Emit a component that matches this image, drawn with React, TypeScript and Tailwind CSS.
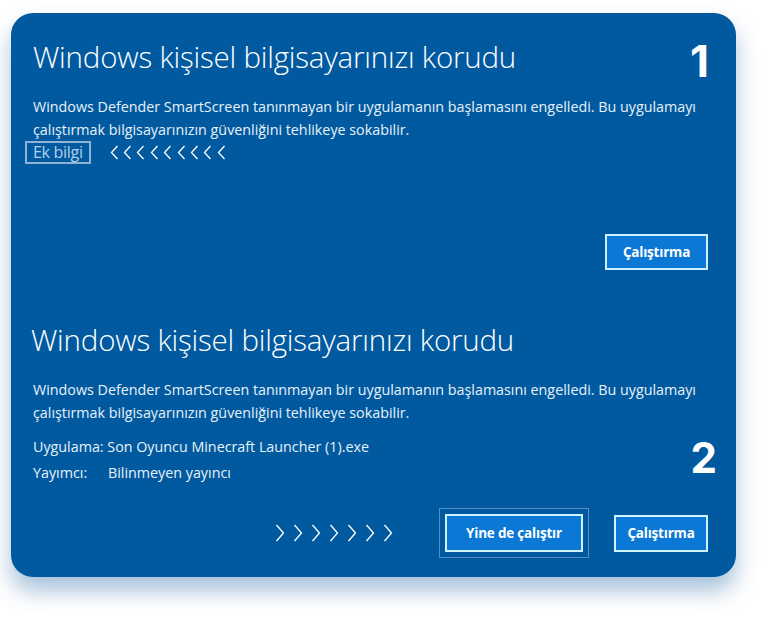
const Chevrons = ({ count, dir }: { count: number; dir: "left" | "right" }) => (
  <div className={`flex items-center ${dir === "left" ? "gap-[4.4px]" : "gap-[8px]"}`}>
    {Array.from({ length: count }).map((_, i) =>
      dir === "left" ? (
        <svg key={i} width="9" height="15" viewBox="0 0 9 15" fill="none">
          <path d="M7.5 1 L1.5 7.5 L7.5 14" stroke="white" strokeWidth="1.3" />
        </svg>
      ) : (
        <svg key={i} width="10" height="18" viewBox="0 0 10 18" fill="none">
          <path d="M1.5 1 L8.5 9 L1.5 17" stroke="white" strokeWidth="1.3" />
        </svg>
      )
    )}
  </div>
);

const PrimaryButton = ({ label, className = "" }: { label: string; className?: string }) => (
  <div
    className={`flex items-center justify-center border-2 border-[#cdf3ff] bg-[#0a78d4] text-[13.5px] font-bold tracking-[-0.2px] text-white ${className}`}
  >
    {label}
  </div>
);

const Body = () => (
  <p className="text-[14.3px] leading-[23px] text-[#e8f1fa]">
    Windows Defender SmartScreen tanınmayan bir uygulamanın başlamasını engelledi. Bu uygulamayı
    <br />
    çalıştırmak bilgisayarınızın güvenliğini tehlikeye sokabilir.
  </p>
);

export default function App() {
  return (
    <div
      className="h-[619px] w-[765px] bg-white pl-[11px] pt-[13px]"
      style={{ fontFamily: '"Open Sans", "Noto Sans", sans-serif' }}
    >
      <div className="flex h-[564px] w-[725px] flex-col rounded-[22px] bg-[#015a9f] pl-[22px] pr-[28px] text-white shadow-[0_14px_22px_rgba(0,80,150,0.35)]">
        {/* ÜST BÖLÜM */}
        <div className="relative pt-[26px]">
          <h1 className="text-[29.5px] font-light leading-[36px] tracking-[-0.2px]">
            Windows kişisel bilgisayarınızı korudu
          </h1>
          <div className="absolute -right-[1px] top-[26px] text-[44px] font-bold leading-none" style={{ fontFamily: "Inter, sans-serif" }}>
            1
          </div>
          <div className="mt-[20px]">
            <Body />
          </div>
          <div className="flex items-center gap-[19px]">
            <span className="-ml-[8px] border-2 border-[#8fb3d6] px-[6px] text-[16px] leading-[19px] tracking-[-0.3px] text-[#b6cfe8]">
              Ek bilgi
            </span>
            <Chevrons count={9} dir="left" />
          </div>
          <div className="mt-[70px] flex justify-end">
            <PrimaryButton label="Çalıştırma" className="h-[36px] w-[103px]" />
          </div>
        </div>

        {/* ALT BÖLÜM */}
        <div className="relative pt-[52px]">
          <h1 className="-ml-[2px] text-[29.5px] font-light leading-[36px] tracking-[-0.2px]">
            Windows kişisel bilgisayarınızı korudu
          </h1>
          <div className="absolute -right-[9px] top-[167px] text-[42px] font-bold leading-none" style={{ fontFamily: "Inter, sans-serif" }}>
            2
          </div>
          <div className="mt-[20px]">
            <Body />
          </div>
          <div className="mt-[10px] text-[14.3px] leading-[26px] text-[#e8f1fa]">
            <div>Uygulama: Son Oyuncu Minecraft Launcher (1).exe</div>
            <div className="flex">
              <span className="w-[75px]">Yayımcı:</span>
              <span>Bilinmeyen yayıncı</span>
            </div>
          </div>
          <div className="mt-[22px] flex items-center justify-end">
            <Chevrons count={7} dir="right" />
            <div className="ml-[46px] border border-[#8fb3d6]/60 p-[5px]">
              <PrimaryButton label="Yine de çalıştır" className="h-[38px] w-[138px]" />
            </div>
            <PrimaryButton label="Çalıştırma" className="ml-[25px] h-[37px] w-[94px]" />
          </div>
        </div>
      </div>
    </div>
  );
}
